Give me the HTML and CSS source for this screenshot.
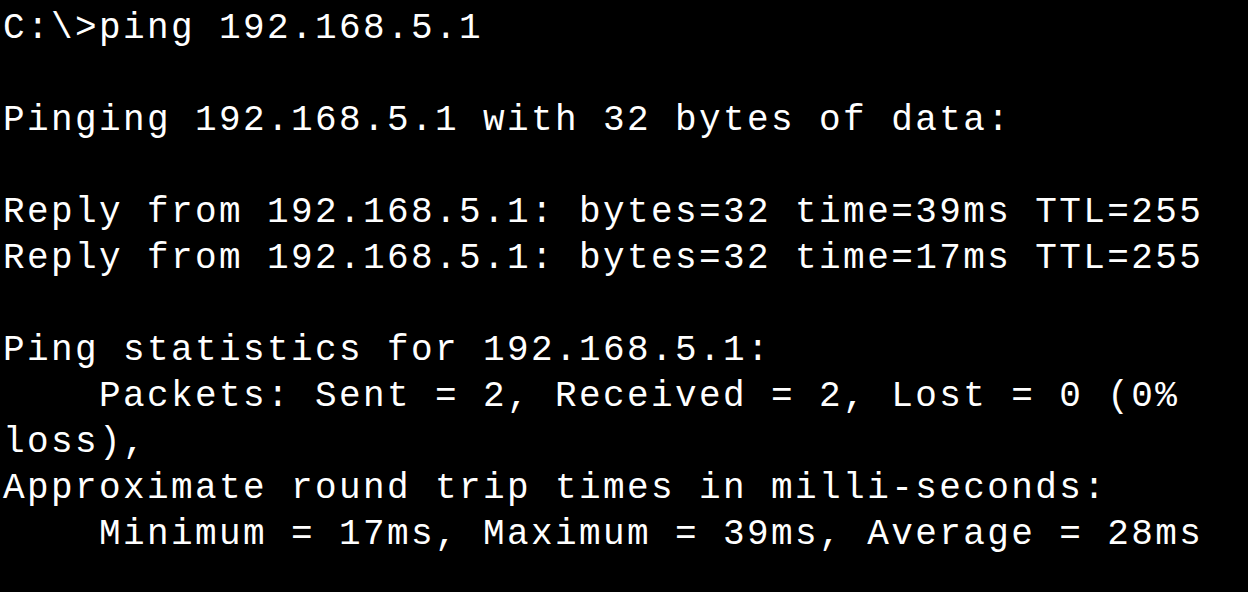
FILE: index.html
```html
<!DOCTYPE html>
<html>
<head>
<meta charset="utf-8">
<link rel="stylesheet" href="styles.css">
</head>
<body>
<pre class="console">C:\&gt;ping 192.168.5.1

Pinging 192.168.5.1 with 32 bytes of data:

Reply from 192.168.5.1: bytes=32 time=39ms TTL=255
Reply from 192.168.5.1: bytes=32 time=17ms TTL=255

Ping statistics for 192.168.5.1:
    Packets: Sent = 2, Received = 2, Lost = 0 (0%
loss),
Approximate round trip times in milli-seconds:
    Minimum = 17ms, Maximum = 39ms, Average = 28ms</pre>
</body>
</html>
```
FILE: styles.css
```css
html, body {
  margin: 0;
  padding: 0;
  background: #000;
  width: 1248px;
  height: 592px;
  overflow: hidden;
}
.console {
  margin: 0;
  padding: 6px 0 0 3px;
  font-family: "Courier New", "Liberation Mono", monospace;
  font-size: 36px;
  letter-spacing: 2.4px;
  line-height: 46px;
  color: #fff;
  white-space: pre;
}
```
